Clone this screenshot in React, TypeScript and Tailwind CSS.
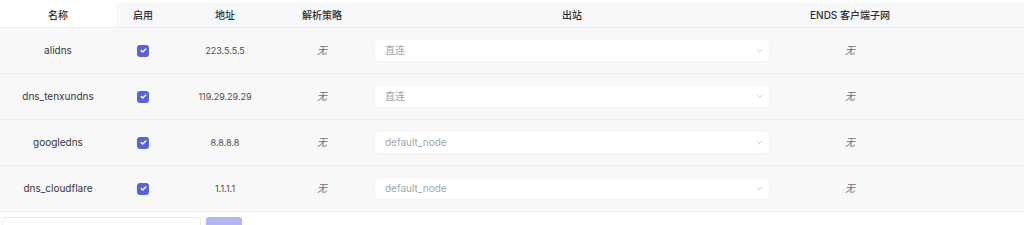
import React from 'react';

interface DnsRow {
  name: string;
  address: string;
  outbound: string;
}

const rows: DnsRow[] = [
  { name: 'alidns', address: '223.5.5.5', outbound: '直连' },
  { name: 'dns_tenxundns', address: '119.29.29.29', outbound: '直连' },
  { name: 'googledns', address: '8.8.8.8', outbound: 'default_node' },
  { name: 'dns_cloudflare', address: '1.1.1.1', outbound: 'default_node' },
];

const cols = 'grid grid-cols-[116px_54px_110px_84px_416px_140px_1fr]';

const Checkbox = () => (
  <span className="flex h-[12px] w-[12px] items-center justify-center rounded-[3px] bg-[#5b62d6]">
    <svg viewBox="0 0 12 12" className="h-[9px] w-[9px]" fill="none" stroke="white" strokeWidth="2" strokeLinecap="round" strokeLinejoin="round">
      <path d="M3 6.2 5 8l4-4" />
    </svg>
  </span>
);

const OutboundSelect = ({ value }: { value: string }) => (
  <div className="flex h-[23px] w-full items-center justify-between rounded-[3px] border border-[#f4f4f6] bg-white pl-[10px] pr-[6px]">
    <span className="text-[10px] text-[#a3a6ad]">{value}</span>
    <svg viewBox="0 0 10 10" className="h-[7px] w-[7px]" fill="none" stroke="#b5b8bf" strokeWidth="1.1" strokeLinecap="round" strokeLinejoin="round">
      <path d="M2 3.5 5 6.5l3-3" />
    </svg>
  </div>
);

export default function App() {
  return (
    <div className="h-[225px] w-[1024px] overflow-hidden bg-white font-['Inter','Noto_Sans_CJK_SC',sans-serif] text-[#333]">
      <div className="pt-[3px]">
        <div className={`${cols} h-[25px] items-center border-b border-[#ebecef] bg-[#f7f8fa] text-[10px] font-medium text-[#2b2d33]`}>
          <div className="flex h-full items-center justify-center bg-white">名称</div>
          <div className="text-center">启用</div>
          <div className="text-center">地址</div>
          <div className="text-center">解析策略</div>
          <div className="text-center">出站</div>
          <div className="text-center">ENDS 客户端子网</div>
          <div />
        </div>
        {rows.map((r) => (
          <div key={r.name} className={`${cols} h-[46px] items-center border-b border-[#ececee] bg-[#f8f8f9] text-[10px]`}>
            <div className="text-center text-[#34363b]">{r.name}</div>
            <div className="flex justify-center">
              <Checkbox />
            </div>
            <div className="text-center text-[9px] text-[#4a4c52]">{r.address}</div>
            <div className="text-center italic text-[#6b6e75]">无</div>
            <div className="px-[10px]">
              <OutboundSelect value={r.outbound} />
            </div>
            <div className="text-center italic text-[#6b6e75]">无</div>
            <div />
          </div>
        ))}
      </div>
      <div className="mt-[5px] flex gap-[5px] pl-[2px]">
        <div className="h-[24px] w-[199px] rounded-[3px] border border-[#ececef] bg-white" />
        <div className="h-[24px] w-[36px] rounded-[3px] bg-[#b3b6f1]" />
      </div>
    </div>
  );
}
